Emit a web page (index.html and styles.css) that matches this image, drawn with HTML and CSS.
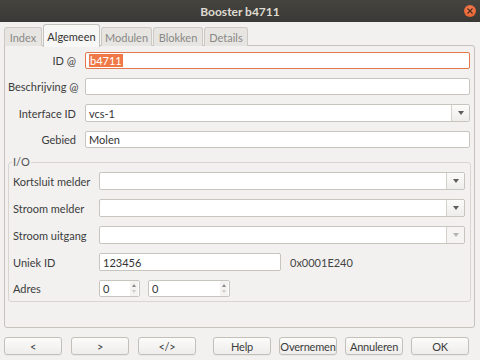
FILE: index.html
```html
<!DOCTYPE html>
<html>
<head>
<meta charset="utf-8">
<link rel="stylesheet" href="styles.css">
</head>
<body>
<div class="window">
  <div class="titlebar">
    <span class="title">Booster b4711</span>
    <span class="close"><svg width="8" height="8" viewBox="0 0 8 8"><path d="M1.5 1.5L6.5 6.5M6.5 1.5L1.5 6.5" stroke="#4a2a1a" stroke-width="1.2"/></svg></span>
  </div>
  <div class="content">
    <div class="tabs">
      <div class="tab">Index</div>
      <div class="tab active">Algemeen</div>
      <div class="tab">Modulen</div>
      <div class="tab">Blokken</div>
      <div class="tab">Details</div>
    </div>
    <div class="panel">
      <div class="form">
        <label class="lbl">ID @</label>
        <div class="input focus"><span class="sel">b4711</span></div>
        <label class="lbl">Beschrijving @</label>
        <div class="input"></div>
        <label class="lbl">Interface ID</label>
        <div class="combo"><span class="ctext">vcs-1</span><span class="arrow"><i class="tri"></i></span></div>
        <label class="lbl">Gebied</label>
        <div class="input"><span class="itext">Molen</span></div>
      </div>
      <div class="group">
        <span class="legend">I/O</span>
        <div class="gform">
          <label class="glbl">Kortsluit melder</label>
          <div class="combo"><span class="ctext"></span><span class="arrow"><i class="tri"></i></span></div>
          <label class="glbl">Stroom melder</label>
          <div class="combo"><span class="ctext"></span><span class="arrow"><i class="tri"></i></span></div>
          <label class="glbl">Stroom uitgang</label>
          <div class="combo disabled"><span class="ctext"></span><span class="arrow"><i class="tri"></i></span></div>
          <label class="glbl">Uniek ID</label>
          <div class="line">
            <div class="input uid"><span class="itext">123456</span></div>
            <span class="hex">0x0001E240</span>
          </div>
          <label class="glbl">Adres</label>
          <div class="line">
            <div class="spin s1"><span class="itext">0</span><span class="spinbtn"><i class="up"></i><i class="dn"></i></span></div>
            <div class="spin s2"><span class="itext">0</span><span class="spinbtn"><i class="up"></i><i class="dn"></i></span></div>
          </div>
        </div>
      </div>
    </div>
    <div class="buttons">
      <div class="bgroup">
        <button class="btn">&lt;</button>
        <button class="btn">&gt;</button>
        <button class="btn">&lt;/&gt;</button>
      </div>
      <div class="bgroup right">
        <button class="btn">Help</button>
        <button class="btn">Overnemen</button>
        <button class="btn">Annuleren</button>
        <button class="btn">OK</button>
      </div>
    </div>
  </div>
</div>
</body>
</html>
```
FILE: styles.css
```css
* { box-sizing: border-box; }
html, body { margin: 0; padding: 0; }
body {
  width: 480px; height: 360px; overflow: hidden;
  background: #f2f1f0;
  font-family: Lato, "Liberation Sans", sans-serif;
  font-size: 11px;
  color: #3c3c3c;
}
.window { width: 480px; height: 360px; display: flex; flex-direction: column; }
.titlebar {
  height: 22px;
  background: linear-gradient(#46443f, #3a3935);
  display: flex; align-items: center; justify-content: center;
  position: relative;
}
.title { color: #dfdbd2; font-weight: bold; font-size: 12px; }
.close {
  position: absolute; right: 4px; top: 5px;
  width: 12px; height: 12px; border-radius: 50%;
  background: radial-gradient(circle at 50% 40%, #f5845c, #e2561f);
  display: flex; align-items: center; justify-content: center;
}
.content { padding: 2px 5px 0 4px; display: flex; flex-direction: column; }
.tabs { display: flex; height: 22px; align-items: flex-end; position: relative; z-index: 1; }
.tab {
  height: 19px;
  border: 1px solid #cdcac4; border-bottom: none;
  border-radius: 3px 3px 0 0;
  background: #e6e5e2;
  color: #8a8884;
  display: flex; align-items: center; justify-content: center;
  margin-right: 1px;
  white-space: nowrap;
}
.tab:nth-child(1) { width: 38px; }
.tab.active {
  background: #f7f7f6; color: #333;
  border-color: #c6c3bd;
  margin-bottom: -1px; height: 23px;
  width: 57px;
}
.tab:nth-child(3) { width: 51px; }
.tab:nth-child(4) { width: 50px; }
.tab:nth-child(5) { width: 44px; }
.panel {
  height: 283px;
  border: 1px solid #c6c3bd;
  border-radius: 0 3px 3px 3px;
  background: #f2f1f0;
  padding: 6px 3px 0 3px;
  margin-top: -1px;
}
.form {
  display: grid;
  grid-template-columns: 68px 1fr;
  column-gap: 9px;
  row-gap: 9px;
  margin-right: 1px;
}
.lbl { text-align: right; align-self: center; white-space: nowrap; }
.input {
  height: 17px;
  background: #fff;
  border: 1px solid #c8c5bf;
  border-radius: 2px;
  display: flex; align-items: center;
  padding: 0 3px;
}
.input.focus { border-color: #e3764a; }
.sel { background: #f07746; color: #fff; padding: 0 1px; line-height: 13px; }
.itext { color: #333; }
.combo {
  height: 18px;
  background: #fff;
  border: 1px solid #c8c5bf;
  border-radius: 2px;
  display: flex; align-items: stretch;
}
.ctext { flex: 1; padding: 0 3px; display: flex; align-items: center; color: #333; }
.arrow {
  width: 18px; border-left: 1px solid #d4d1cc;
  background: linear-gradient(#fbfbfa, #eeedeb);
  display: flex; align-items: center; justify-content: center;
}
.tri { width: 0; height: 0; border-left: 3.5px solid transparent; border-right: 3.5px solid transparent; border-top: 4px solid #5c5c5c; }
.combo.disabled .tri { border-top-color: #b5b3af; }
.combo.disabled .arrow { background: #f5f4f2; }
.group {
  position: relative;
  margin-top: 14px;
  border: 1px solid #d9d6d1;
  border-radius: 3px;
  padding: 9px 5px 4px 4px;
  height: 140px;
}
.legend {
  position: absolute; left: 3px; top: -7px;
  padding: 0 1px; background: #f2f1f0;
  line-height: 12px; color: #555;
}
.gform {
  display: grid;
  grid-template-columns: 86px 1fr;
  row-gap: 9px;
}
.glbl { align-self: center; white-space: nowrap; }
.line { display: flex; align-items: center; }
.input.uid { width: 182px; height: 18px; }
.hex { margin-left: 9px; color: #444; }
.spin {
  height: 17px; background: #fff;
  border: 1px solid #c8c5bf; border-radius: 2px;
  display: flex; align-items: center; padding-left: 3px;
}
.spin .itext { flex: 1; }
.s1 { width: 41px; }
.s2 { width: 82px; margin-left: 8px; }
.spinbtn {
  width: 8px; height: 15px; margin-right: 1px;
  background: #f4f3f1;
  display: flex; flex-direction: column; align-items: center; justify-content: space-around;
  padding: 2px 0;
}
.up { width: 0; height: 0; border-left: 2px solid transparent; border-right: 2px solid transparent; border-bottom: 3px solid #888; }
.dn { width: 0; height: 0; border-left: 2px solid transparent; border-right: 2px solid transparent; border-top: 3px solid #ccc; }
.buttons { display: flex; margin-top: 9px; }
.bgroup { display: flex; gap: 9px; }
.bgroup.right { margin-left: 17px; gap: 8px; }
.btn {
  width: 58px; height: 18px;
  font-family: inherit; font-size: 11px; color: #3c3c3c;
  letter-spacing: -0.2px;
  border: 1px solid #c3c0ba; border-radius: 3px;
  background: linear-gradient(#fbfbfa, #eeedeb);
  padding: 0; margin: 0;
  white-space: nowrap;
  box-shadow: 0 1px 0 rgba(0,0,0,0.04);
}
```
